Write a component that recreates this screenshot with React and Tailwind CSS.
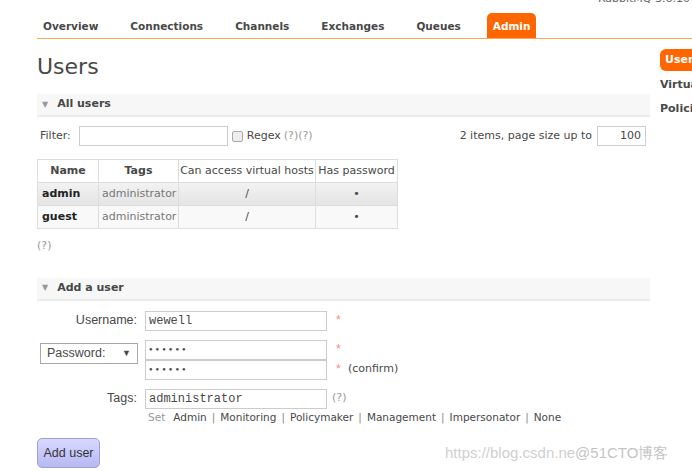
export default function App() {
  const navItems = ["Overview", "Connections", "Channels", "Exchanges", "Queues"];
  const tagLinks = ["Admin", "Monitoring", "Policymaker", "Management", "Impersonator", "None"];

  return (
    <div className="relative h-[471px] w-[692px] overflow-hidden bg-white text-[11px] text-[#484848] [font-family:'DejaVu_Sans',Verdana,sans-serif]">
      {/* header */}
      <div className="-mt-[8px] pr-[2px] text-right text-[11px] leading-[14px] text-[#666]">RabbitMQ 3.6.10</div>

      <div className="ml-[37px] mt-[8px] flex h-[25px] items-end gap-[20px] border-b border-[#f9a857] text-[10.5px]">
        {navItems.map((n) => (
          <div key={n} className="px-[6px] pb-[5px] font-bold leading-[14px]">
            {n}
          </div>
        ))}
        <div className="rounded-t-[5px] bg-[#ff6600] px-[6px] pb-[5px] pt-[6px] font-bold leading-[14px] text-white">Admin</div>
      </div>

      <div className="flex">
        <div className="ml-[37px] w-[613px] shrink-0">
          <h1 className="mt-[14px] text-[22px] leading-[28px]">Users</h1>

          {/* all users */}
          <div className="mt-[13px] flex h-[23px] items-center border-b-2 border-[#ececec] bg-[#f7f7f7] pl-[5px] font-bold">
            <span className="mr-[9px] text-[8px] text-[#999]">▼</span>
            All users
          </div>

          <div className="mt-[9px] flex items-center">
            <span className="ml-[3px]">Filter:</span>
            <input className="ml-[8px] h-[20px] w-[149px] border border-[#ccc]" />
            <span className="ml-[4px] h-[11px] w-[11px] rounded-[2px] border border-[#aaa] bg-[#eee]" />
            <span className="ml-[4px]">Regex</span>
            <span className="ml-[3px] text-[#999]">(?)(?)</span>
            <span className="ml-auto">2 items, page size up to</span>
            <div className="ml-[5px] mr-[4px] flex h-[20px] w-[49px] items-center justify-end border border-[#ccc] pr-[4px]">100</div>
          </div>

          <table className="mt-[13px] table-fixed border-collapse whitespace-nowrap">
            <thead>
              <tr className="h-[23px]">
                <th className="w-[61px] border border-[#ddd] font-bold">Name</th>
                <th className="w-[80px] border border-[#ddd] font-bold">Tags</th>
                <th className="w-[137px] border border-[#ddd] p-0 font-normal">Can access virtual hosts</th>
                <th className="w-[82px] border border-[#ddd] p-0 font-normal">Has password</th>
              </tr>
            </thead>
            <tbody>
              <tr className="h-[23px] bg-gradient-to-b from-[#f2f2f2] to-[#e4e4e4]">
                <td className="border border-[#ddd] pl-[4px] font-bold text-[#222]">admin</td>
                <td className="border border-[#ddd] pl-[3px] text-[#777]">administrator</td>
                <td className="border border-[#ddd] text-center">/</td>
                <td className="border border-[#ddd] text-center">•</td>
              </tr>
              <tr className="h-[23px] bg-[#f9f9f9]">
                <td className="border border-[#ddd] pl-[4px] font-bold text-[#222]">guest</td>
                <td className="border border-[#ddd] pl-[3px] text-[#777]">administrator</td>
                <td className="border border-[#ddd] text-center">/</td>
                <td className="border border-[#ddd] text-center">•</td>
              </tr>
            </tbody>
          </table>

          <div className="mt-[9px] text-[#999]">(?)</div>

          {/* add a user */}
          <div className="mt-[23px] flex h-[23px] items-center border-b-2 border-[#ececec] bg-[#f7f7f7] pl-[5px] font-bold">
            <span className="mr-[9px] text-[8px] text-[#999]">▼</span>
            Add a user
          </div>

          <div className="mt-[10px] [font-family:'Liberation_Sans',Arial,sans-serif] text-[12.5px]">
            <div className="flex items-center">
              <div className="w-[100px] text-right">Username:</div>
              <div className="ml-[8px] flex h-[20px] w-[182px] items-center border border-[#ccc] pl-[3px] [font-family:'Liberation_Mono',monospace] text-[12px]">wewell</div>
              <span className="ml-[9px] text-[#f88]">*</span>
            </div>

            <div className="mt-[9px] flex">
              <div className="flex h-[40px] w-[108px] items-center pl-[3px]">
                <div className="-mt-[12px] flex h-[21px] w-[98px] items-center justify-between border border-[#aaa] px-[6px]">
                  <span>Password:</span>
                  <span className="text-[9px]">▼</span>
                </div>
              </div>
              <div className="flex flex-col">
                <div className="flex items-center">
                  <div className="flex h-[20px] w-[182px] items-center border border-[#ccc] pl-[3px] text-[6px] tracking-[3px]">●●●●●●</div>
                  <span className="ml-[9px] text-[#f88]">*</span>
                </div>
                <div className="flex items-center">
                  <div className="flex h-[20px] w-[182px] items-center border border-[#ccc] pl-[3px] text-[6px] tracking-[3px]">●●●●●●</div>
                  <span className="ml-[9px] text-[#f88]">*</span>
                  <span className="ml-[7px] [font-family:'DejaVu_Sans',Verdana,sans-serif] text-[11px]">(confirm)</span>
                </div>
              </div>
            </div>

            <div className="mt-[9px] flex items-center">
              <div className="w-[100px] text-right">Tags:</div>
              <div className="ml-[8px] flex h-[20px] w-[182px] items-center border border-[#ccc] pl-[3px] [font-family:'Liberation_Mono',monospace] text-[12px]">administrator</div>
              <span className="ml-[5px] [font-family:'DejaVu_Sans',Verdana,sans-serif] text-[11px] text-[#999]">(?)</span>
            </div>

            <div className="ml-[111px] mt-[1px] flex [font-family:'DejaVu_Sans',Verdana,sans-serif] text-[10.5px]">
              <span className="mr-[8px] text-[#999]">Set</span>
              {tagLinks.map((t, i) => (
                <span key={t}>
                  {i > 0 && <span className="mx-[5px] text-[#888]">|</span>}
                  {t}
                </span>
              ))}
            </div>

            <button className="mt-[13px] h-[30px] w-[63px] rounded-[5px] border border-[#9f9fd9] bg-gradient-to-b from-[#d8d8ff] to-[#b8b8f4] text-[12.5px] text-[#333]">
              Add user
            </button>
          </div>
        </div>

        {/* sidebar */}
        <div className="ml-[10px] mt-[10px] flex flex-col gap-[6px] whitespace-nowrap font-bold">
          <div className="h-[22px] rounded-l-[6px] bg-[#ff6600] pl-[5px] leading-[22px] text-white">Users</div>
          <div className="leading-[16px]">Virtual Hosts</div>
          <div className="mt-[2px] leading-[16px]">Policies</div>
        </div>
      </div>

      <div className="pointer-events-none absolute left-[445px] top-[442px] [font-family:'Liberation_Sans',Arial,sans-serif] text-[15px] text-[#d0d0d0]">
        https://blog.csdn.ne<span className="text-[#c4c4c4]">@51CTO博客</span>
      </div>
    </div>
  );
}
